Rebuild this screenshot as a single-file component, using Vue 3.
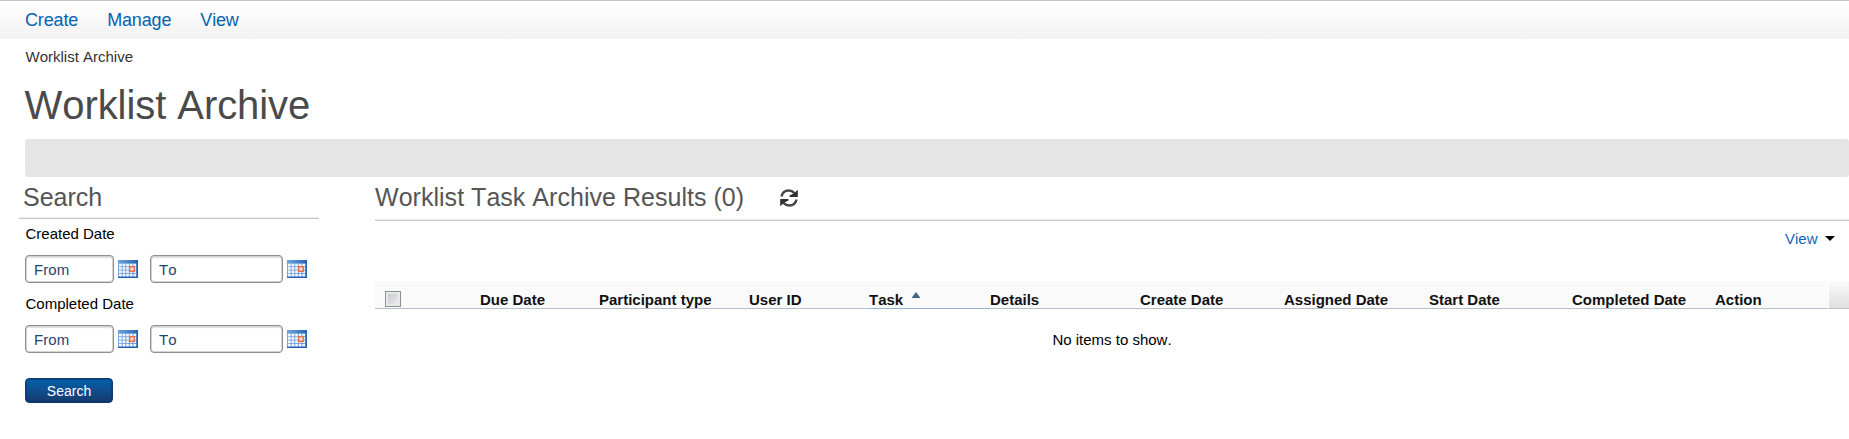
<script setup>
const menu = ['Create', 'Manage', 'View']
const filters = ['Created Date', 'Completed Date']
const fields = [
  { label: 'From', size: 'short' },
  { label: 'To', size: 'long' },
]
const columns = [
  'Due Date', 'Participant type', 'User ID', 'Task', 'Details',
  'Create Date', 'Assigned Date', 'Start Date', 'Completed Date', 'Action',
]
</script>

<template>
  <div class="page">
    <nav class="menu">
      <a v-for="m in menu" :key="m" class="menu-link">{{ m }}</a>
    </nav>
    <div class="crumb">Worklist Archive</div>
    <h1 class="title">Worklist Archive</h1>
    <div class="toolbar"></div>

    <div class="content">
      <aside class="search">
        <h2 class="heading search-heading">Search</h2>
        <section v-for="f in filters" :key="f" class="filter">
          <div class="filter-label">{{ f }}</div>
          <div class="filter-row">
            <template v-for="x in fields" :key="x.label">
              <div class="field" :class="x.size">{{ x.label }}</div>
              <svg class="calendar" width="20" height="18" viewBox="0 0 20 18">
                <defs>
                  <linearGradient id="calTop" x1="0" y1="0" x2="1" y2="0">
                    <stop offset="0" stop-color="#6fa5dc" />
                    <stop offset="1" stop-color="#2465b4" />
                  </linearGradient>
                  <linearGradient id="calBody" x1="0" y1="0" x2="1" y2="0.4">
                    <stop offset="0" stop-color="#86aade" />
                    <stop offset="1" stop-color="#5e8fd0" />
                  </linearGradient>
                </defs>
                <rect width="20" height="18" fill="url(#calBody)" />
                <rect width="20" height="3.5" fill="url(#calTop)" />
                <g fill="#f4f8ff">
                  <template v-for="r in 4" :key="r">
                    <rect
                      v-for="c in 5"
                      :key="c"
                      :x="c * 3.6 - 2.600"
                      :y="r * 3.4 + 0.3"
                      width="2.700"
                      height="2.600"
                    />
                  </template>
                </g>
                <rect x="11.700" y="6.700" width="4.600" height="4.600" fill="#fbe3dc" stroke="#e5714f" stroke-width="1.500" />
                <path d="M19.300 0V17.400H0" fill="none" stroke="#2161ad" stroke-width="1.300" />
              </svg>
            </template>
          </div>
        </section>
        <button class="submit" type="button">Search</button>
      </aside>

      <main class="results">
        <div class="results-head">
          <h2 class="heading">Worklist Task Archive Results (0)</h2>
          <svg class="refresh" width="18" height="18" viewBox="0 0 18 18">
            <path d="M1.500 7.500C2.300 3.800 5 1.500 8.700 1.500c2.400 0 4.300 1 5.800 2.600" fill="none" stroke="#444" stroke-width="2.400" />
            <path d="M17.800.8V8H9.600V6.600L14 4.200Z" fill="#303030" />
            <path d="M16.500 10.500C15.700 14.200 13 16.500 9.300 16.500c-2.400 0-4.300-1-5.800-2.600" fill="none" stroke="#444" stroke-width="2.400" />
            <path d="M.2 17.200V10H8.400V11.400L4 13.800Z" fill="#303030" />
          </svg>
        </div>
        <div class="view-bar">
          <a class="view-link">View</a>
          <svg width="10" height="5" viewBox="0 0 10 5"><path d="M0 0H10L5 5Z" fill="#000" /></svg>
        </div>
        <div class="table-head">
          <div class="cell check-cell"><span class="check"></span></div>
          <div v-for="c in columns" :key="c" class="cell" :class="{ sorted: c === 'Task' }">
            {{ c }}
            <svg v-if="c === 'Task'" class="sort" width="10" height="6" viewBox="0 0 10 6">
              <path d="M.5 6 5 0 9.500 6Z" fill="#3f6683" />
            </svg>
          </div>
          <div class="corner"></div>
        </div>
        <div class="empty">No items to show.</div>
      </main>
    </div>
  </div>
</template>

<style>
body { background: #fff; }
</style>

<style scoped>
.page {
  box-sizing: border-box;
  height: 439px;
  overflow: hidden;
  font: 15px/17px "Liberation Sans", Arial, sans-serif;
  font-kerning: none;
  color: #000;
}
.menu {
  box-sizing: border-box;
  display: flex;
  gap: 29px;
  height: 39px;
  padding: 9px 25px 0;
  border-top: 1px solid #c6c6c6;
  background: linear-gradient(#fff, #f2f2f2);
}
.menu-link {
  font-size: 18px;
  line-height: 20px;
  letter-spacing: -0.15px;
  color: #0363b0;
}
.crumb {
  margin: 9px 0 0 25.5px;
  color: #333;
}
.title {
  margin: 18px 0 0 24.5px;
  font-size: 40px;
  line-height: 44px;
  font-weight: 400;
  letter-spacing: -0.06px;
  color: #4a4a4a;
}
.toolbar {
  height: 38px;
  margin: 12px 0 0 25px;
  border-radius: 3px;
  background: #e5e5e5;
}
.content {
  display: flex;
  gap: 56px;
  padding-left: 19px;
}
.search { width: 300px; }
.heading {
  margin: 0;
  font-size: 25px;
  line-height: 28px;
  font-weight: 400;
  color: #555;
  white-space: nowrap;
}
.search-heading {
  padding: 6px 0 7px 4px;
  border-bottom: 1px solid #c6c6c6;
  box-shadow: inset 0 -1px #eee;
}
.filter { padding-left: 6px; }
.filter-label { padding: 6px 0 0 0.5px; }
.filter + .filter .filter-label { padding-top: 12px; }
.filter-row {
  display: flex;
  align-items: center;
  margin-top: 13px;
}
.field {
  box-sizing: border-box;
  height: 28px;
  padding: 5px 0 0 8px;
  border: 1px solid #8f8f8f;
  border-radius: 4px;
  box-shadow: inset 0 0 0 1px #d4d4d4, inset 0 2px 1px #ddd;
  color: #1f4572;
  letter-spacing: 0.1px;
}
.short { width: 89px; }
.long { width: 133px; }
.calendar { margin: 0 12px 0 4px; }
.submit {
  display: block;
  width: 88px;
  height: 25px;
  margin: 25px 0 0 6px;
  padding: 1px 0 0;
  border: 1px solid #14386f;
  border-radius: 4px;
  background: linear-gradient(#0561aa, #163a70);
  box-shadow: inset 0 0 1px 1px rgba(10, 50, 110, 0.5);
  font: 14px/22px "Liberation Sans", Arial, sans-serif;
  color: #fff;
}
.results {
  flex: 1;
  min-width: 0;
}
.results-head {
  box-sizing: border-box;
  display: flex;
  align-items: flex-start;
  height: 44px;
  padding-top: 6px;
  border-bottom: 1px solid #c6c6c6;
  box-shadow: inset 0 -1px #eee;
}
.results-head .heading {
  width: 405px;
  letter-spacing: 0.03px;
}
.refresh { margin-top: 6px; }
.view-bar {
  display: flex;
  justify-content: flex-end;
  align-items: center;
  gap: 7px;
  height: 17px;
  padding: 9px 14.5px 34px 0;
}
.view-link { color: #0c66b5; }
.table-head {
  display: grid;
  grid-template-columns: 105px 119px 150px 120px 121px 150px 144px 145px 143px 143px 113px 21px;
  height: 28px;
  font-weight: 700;
  color: #111;
}
.cell {
  box-sizing: border-box;
  padding-top: 10px;
  border-bottom: 1px solid #b4bfd0;
  background: #fafafa;
  white-space: nowrap;
}
.sorted { border-color: #8fb2d6; }
.sort { margin: 0 0 7px 4px; }
.check-cell { padding-left: 10px; }
.check {
  box-sizing: border-box;
  display: block;
  width: 16px;
  height: 16px;
  border: 1px solid #8e8f8f;
  background: linear-gradient(135deg, #bfc3ca, #f3f3f3);
  box-shadow: inset 0 0 0 2px #e9e9e9;
}
.corner {
  margin-left: 1px;
  border-bottom: 1px solid #b9bcc9;
  background: linear-gradient(#fafafa, #e0e0e0);
}
.empty {
  margin-top: 22px;
  text-align: center;
}
</style>
